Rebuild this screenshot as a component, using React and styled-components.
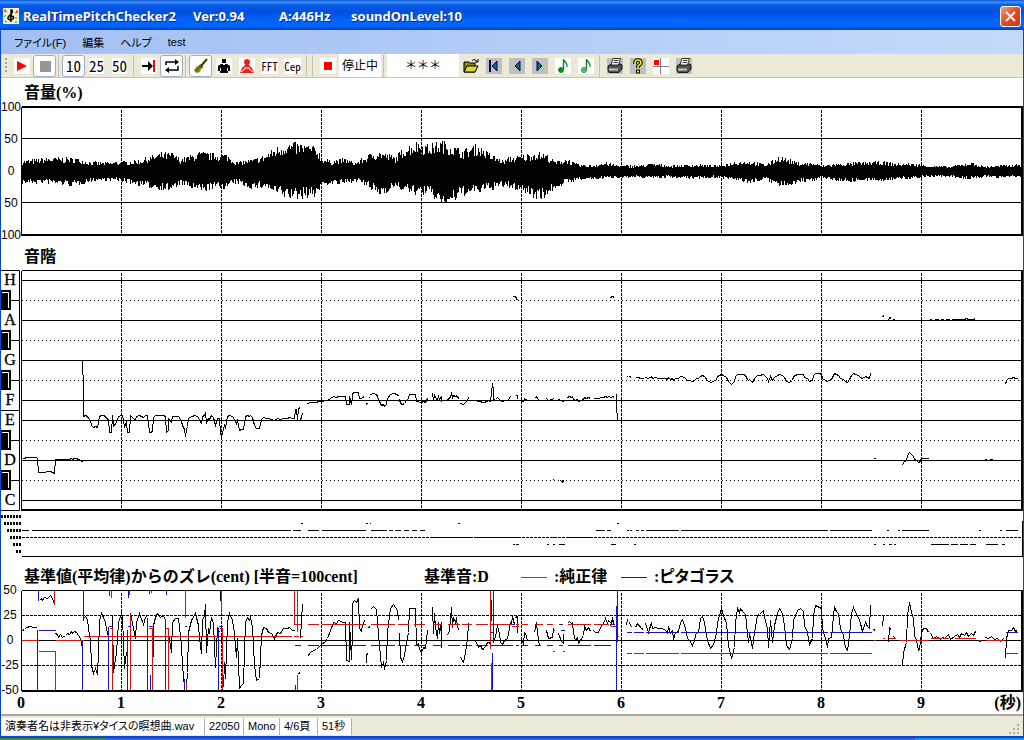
import styled, { createGlobalStyle } from "styled-components";

const GlobalStyle = createGlobalStyle`
  * {
    box-sizing: border-box;
  }

  body {
    margin: 0;
    background: #ffffff;
    color: #000000;
    font-family: "Liberation Sans", "Noto Sans CJK JP", sans-serif;
    font-size: 11px;
  }

  button {
    font: inherit;
    color: inherit;
  }
`;

/* ---------- data ---------- */

// Every panel is a slice of the same canvas: x runs from 21 (0 s) to 1021 (10 s).
const LEFT = 21;
const WIDTH = 1002;
const SECONDS = [1, 2, 3, 4, 5, 6, 7, 8, 9];

// [x, height above zero, height below zero]
const envelope = [
  [21, 11, 12], [50, 14, 12], [75, 14, 15], [90, 10, 10], [105, 9, 9], [121, 10, 10],
  [140, 12, 15], [160, 19, 18], [172, 19, 20], [180, 13, 13], [200, 20, 21], [215, 18, 17],
  [226, 18, 17], [236, 10, 12], [252, 12, 18], [265, 17, 16], [273, 23, 22], [285, 29, 27],
  [300, 29, 28], [316, 25, 25], [322, 14, 14], [330, 11, 13], [345, 13, 13], [355, 9, 9],
  [370, 18, 18], [378, 21, 25], [395, 15, 16], [405, 26, 21], [417, 31, 24], [428, 27, 24],
  [442, 32, 34], [450, 28, 34], [462, 22, 25], [477, 28, 22], [490, 18, 19], [503, 11, 16],
  [510, 15, 17], [521, 16, 20], [536, 20, 28], [545, 18, 27], [555, 10, 17], [566, 13, 12],
  [578, 7, 9], [590, 6, 8], [605, 9, 7], [620, 6, 6], [640, 6, 6], [650, 8, 6],
  [670, 6, 6], [690, 7, 7], [720, 6, 6], [735, 10, 9], [750, 11, 12], [765, 7, 8],
  [780, 16, 16], [795, 10, 12], [815, 8, 9], [821, 6, 6], [840, 8, 10], [870, 10, 10],
  [885, 10, 9], [895, 8, 8], [915, 8, 7], [930, 6, 5], [950, 5, 5], [970, 9, 8],
  [985, 5, 5], [1000, 6, 6], [1021, 8, 6],
];

// y is the deviation in the cent panel (640 = 0 cent, 1px = 1 cent),
// base is the line of the note in the scale panel
const traces = [
  { base: 460, points: "22,630 24,629 26,627 30,626 33,627 36,627 37,628 38,700 41,698 44,699 47,697 50,695 52,699 54,704 55,633 57,634 58,637 60,634 62,637 65,635 67,633 69,634 71,631 72,633 74,631 76,632 78,635 80,638 81,643 82,647" },
  { base: 420, points: "82,340 83,480 83,618 85,616 87,619 88,628 90,640 91,665 93,673 95,668 97,674 98,652 99,620 101,613 103,617 105,622 106,628 108,637 109,700 111,700 112,615 113,672 116,652 118,622 121,613 122,617 124,668 126,652 127,700 129,698 130,613 132,623 135,638 136,622 139,613 143,624 145,617 147,615 149,700 151,700 152,690 153,625 155,617 157,613 160,617 163,615 165,620 166,700 168,690 168,632 171,652 172,622 175,618 178,618 181,645 182,665 184,687 185,720 186,685 187,672 188,632 191,620 195,613 198,625 199,638 201,653 202,620 204,615 205,604 206,652 208,628 209,633 211,617 213,623 215,667 217,628 219,632 220,700 221,718 223,687 224,662 225,678 227,622 229,613 232,620 234,633 236,657 237,638 239,688 241,685 243,683 245,622 247,617 249,620 250,617 252,627 254,665 256,680 259,678 261,635 263,627 266,628 268,632 271,633 274,638 277,632 280,633 283,628 287,628 289,627 292,630 294,630 295,585 296,583 297,638 298,580 300,575" },
  { base: 420, points: "300,638 301,620 302,604" },
  { base: 400, points: "307,656 310,652 313,650 316,649 318,647 322,643 324,642 327,638 330,630 333,622 336,623 338,620 343,622 345,622 346,660 349,661 349,622 351,659 352,632 352,603 354,600 356,602 358,598 359,628 361,631 362,625 364,620" },
  { base: 400, points: "366,662 366,655 367,653" },
  { base: 400, points: "368,628 369,626" },
  { base: 400, points: "370,609 373,606 376,609 377,622 379,645 381,667 383,662 384,669 386,660 387,632 390,608 393,604 397,610 398,620" },
  { base: 400, points: "399,633 400,657 402,661 404,655 406,642 408,632 409,608 412,608 415,608 416,645 418,643 419,649 421,652 423,647 425,648 427,630" },
  { base: 400, points: "432,607 433,633 434,613 435,627 437,638 438,622 439,633 441,622 441,647" },
  { base: 400, points: "447,635 449,630 450,618 451,607 452,627 453,617 455,622 456,617 457,627 459,630" },
  { base: 400, points: "460,657 463,662 465,652 467,638 468,623" },
  { base: 400, points: "475,640 478,647 480,645 482,649 484,648 486,643 488,642 490,643 491,600 492,555 493,590 493,642 495,636 497,625 499,633 500,642 502,644 504,640 507,638 508,633 510,622" },
  { base: 400, points: "515,617 517,616 517,632" },
  { base: 400, points: "521,638 523,644 524,632 525,633 527,640" },
  { base: 400, points: "534,632 536,622 537,632 539,646" },
  { base: 400, points: "546,630 548,638 552,637 553,628" },
  { base: 400, points: "558,633 561,641 563,643 563,633" },
  { base: 400, points: "567,623 569,621 571,623 572,622 573,633 575,640 577,637 578,643 580,640 583,635 584,626 586,630 588,627 590,631" },
  { base: 400, points: "593,630 595,632 598,632 601,625 603,623 605,618 607,623 608,620 611,623 612,620 614,623" },
  { base: 400, points: "616,605 616,660 617,745" },
  { base: 380, points: "626,625 627,619" },
  { base: 380, points: "629,622 631,627" },
  { base: 380, points: "635,627 637,623 641,628 643,629" },
  { base: 380, points: "645,623 648,632 651,622 652,628 655,627 658,628 662,628 665,630 667,633 668,626 670,633 672,630 673,639 675,632 678,631 680,622 682,619 685,628 687,638 689,640 692,645 694,640 696,632 698,632 700,618 702,616 704,622 707,640 710,648 713,644 716,633 717,622 719,615 721,608 723,615 726,623 728,645 731,658 734,647 735,622 737,608 739,612 740,608 743,612 745,614 747,633 748,642 749,633 752,648 754,632 757,615 759,614 763,610 764,617 767,628 768,647 770,620 772,642 774,625 777,613 779,608 782,613 784,625 786,645 789,649 792,638 793,620 797,610 800,608 803,611 804,625 807,632 809,644 812,638 813,615 815,605 819,607 821,608 822,628 825,638 827,647 828,638 831,637 833,615 834,607 836,611 838,613 840,628 843,635 845,647 847,650 849,635 851,613 853,607 855,612 858,617 860,623 862,631 865,622 867,626 869,628 870,605" },
  { base: 460, points: "873,629 875,630" },
  { base: 320, points: "882,626 883,616" },
  { base: 320, points: "888,642 889,627 891,630" },
  { base: 320, points: "893,636 895,638" },
  { base: 460, points: "898,641 899,640" },
  { base: 460, points: "902,665 903,652 906,642 907,615 909,602 911,612 913,618 914,635 916,640 918,650 919,649 921,632 923,628 926,628 928,632" },
  { base: 320, points: "930,633 933,638 936,636 940,639 942,637 944,638 948,634 950,639 954,636 957,634 959,637 961,633 964,635 966,632 968,636 971,633 973,635 975,631" },
  { base: 460, points: "978,641 980,641" },
  { base: 460, points: "985,637 988,638 991,636 994,639 997,638 1000,641 1003,638" },
  { base: 380, points: "1005,658 1006,638 1008,630 1011,630 1013,627 1015,631 1017,630" },
  { base: 300, points: "512,618 515,620 516,632 517,638" },
  { base: 300, points: "610,625 612,620 614,625" },
  { base: 480, points: "552,636 553,637" },
  { base: 480, points: "560,640 562,650 563,642" },
];

const octaveRows = [
  { y: 516, runs: [] },
  { y: 523, runs: [[300, 302], [365, 367], [369, 370], [457, 459], [616, 618]] },
  {
    y: 530,
    runs: [
      [21, 28], [31, 290], [292, 300], [307, 318], [321, 365], [370, 386], [388, 392],
      [394, 400], [403, 408], [411, 416], [419, 424], [595, 604], [606, 610], [626, 628],
      [629, 631], [635, 638], [640, 643], [645, 678], [680, 827], [829, 871], [886, 888],
      [897, 899], [901, 928], [978, 980], [999, 1001], [1005, 1017],
    ],
  },
  { y: 537, runs: [[430, 471], [473, 520], [550, 556], [567, 590]] },
  {
    y: 544,
    runs: [
      [512, 514], [515, 518], [546, 548], [552, 554], [558, 564], [610, 615], [633, 635],
      [873, 875], [882, 884], [888, 891], [893, 895], [930, 948], [950, 957], [959, 967],
      [969, 975], [985, 997], [1001, 1004],
    ],
  },
  { y: 551, runs: [] },
];

// just intonation / Pythagorean reference lines
const just = "M21 640H38M55 640H83M38 651H55V690M54 590V604M83 636H291M293 636H298M300 636H302M112 628V690M111 590V597M130 613V690M109 628H112M129 590V594M148 628H152V690M165 628H168V690M151 590V592M185 590V617M186 682V690M219 628H222V690M221 590V610M294 590V624M297 590V631M294 624H300M297 674V690M307 624H318M321 624H365M370 624H394M397 624H408M413 624H424M432 624H441M447 624H459M461 624H471M475 624H487M490 624H512M515 624H518M521 624H527M534 624H542M546 624H552M558 624H562M567 624H590M593 624H608M490 590V648M491 662V690M552 651H554M562 651H564M511 626H518M610 626H615M616 636H618M626 653H631M633 653H643M645 653H678M680 653H827M829 653H871M873 640H875M882 638H884M888 638H895M898 640H928M930 638H940M943 638H948M954 638H975M978 640H980M985 640H1004M1005 653H1017";
const pythagorean = "M37 629V690M38 590V600M38 630H55M82 640V690M83 590V620M108 626V690M109 590V595M108 626H112M127 629V690M128 590V597M127 626H130M147 617V690M150 674V690M148 626H152M149 590V593M165 618V690M166 590V594M184 678V690M184 626H186M218 627V690M218 626H222V626M295 684V690M294 645H300M307 645H318M321 645H365M370 645H394M397 645H408M413 645H424M432 645H441M447 645H459M461 645H471M475 645H487M490 645H512M515 645H518M521 645H527M534 645H540M546 645H552M558 645H562M567 645H590M593 645H610M493 590V640M492 652V690M490 632H493M511 624H514M552 630H554M560 630H564M559 624H561M610 624H614M616 605V690M617 590V641M626 632H631M633 632H643M645 632H678M680 632H827M829 632H871M1005 632H1017";

const waveform = (() => {
  let seed = 7;
  const random = () => {
    seed = (seed * 16807) % 2147483647;
    return seed / 2147483647;
  };
  let d = "";
  let i = 0;
  for (let x = 22; x < 1022; x++) {
    while (i < envelope.length - 2 && envelope[i + 1][0] <= x) i++;
    const [x0, up0, down0] = envelope[i];
    const [x1, up1, down1] = envelope[i + 1];
    const t = (x - x0) / (x1 - x0);
    const up = (up0 + (up1 - up0) * t) * (0.55 + 0.45 * random());
    const down = (down0 + (down1 - down0) * t) * (0.55 + 0.45 * random());
    d += `M${x} ${Math.round(170 - up)}V${Math.round(171 + down)}`;
  }
  return d;
})();

const parse = (points) => points.split(" ").map((point) => point.split(",").map(Number));

const toScale = ({ base, points }) =>
  parse(points)
    .map(([x, y]) => `${x},${Math.round(base + (y - 640) / 5)}`)
    .join(" ");

// the pen is lifted while the pitch is more than 50 cents away
const toCents = ({ points }) => {
  let down = false;
  return parse(points)
    .map(([x, y]) => {
      const inside = y >= 590 && y <= 690;
      const step = inside ? `${down ? "L" : "M"}${x} ${y}` : "";
      down = inside;
      return step;
    })
    .join("");
};

/* ---------- charts ---------- */

const Plot = ({ top, height, children, label }) => (
  <PlotSvg
    viewBox={`${LEFT} ${top} ${WIDTH} ${height}`}
    preserveAspectRatio="none"
    $height={height}
    role="img"
    aria-label={label}
  >
    <g transform="translate(0.5 0.5)">{children}</g>
  </PlotSvg>
);

const Seconds = ({ from, to }) =>
  SECONDS.map((s) => (
    <path key={s} d={`M${LEFT + s * 100} ${from}V${to}`} strokeDasharray="3 1" />
  ));

const VolumeChart = () => (
  <ChartRow>
    <Axis $height={130}>
      {[["100", 5], ["50", 37], ["0", 69], ["50", 101], ["100", 133]].map(([text, y]) => (
        <text key={y} x="10" y={y}>
          {text}
        </text>
      ))}
    </Axis>
    <Plot top={106} height={130} label="音量">
      <path d="M21 138H1022M21 170H1022M21 202H1022" />
      <Seconds from={109} to={234} />
      <path d={waveform} />
      <path d="M21 106V235M21 106H1022M21 107H1022M21 234H1022M21 235H1022M1021 106V235M1022 106V235" />
    </Plot>
  </ChartRow>
);

const notes = [["H", 280], ["A", 320], ["G", 360], ["F", 400], ["E", 420], ["D", 460], ["C", 500]];
const sharps = [300, 340, 380, 440, 480];

const ScaleChart = () => (
  <ChartRow>
    <Axis $height={242} viewBox="1 270 20 242">
      <path d="M1 270.5H19.5V510.5H1M1 410.5H19" fill="none" stroke="#000" />
      {sharps.map((y) => (
        <g key={y}>
          <rect x="1" y={y - 10} width="10" height="20" />
          <path d={`M2 ${y - 7.5}H8.5V${y + 8}`} fill="none" stroke="#fff" />
          <path d={`M11 ${y + 0.5}H19`} stroke="#000" />
        </g>
      ))}
      {notes.map(([note, y]) => (
        <NoteName key={note} x="10" y={y + 5}>
          {note}
        </NoteName>
      ))}
    </Axis>
    <Plot top={270} height={242} label="音階">
      {notes.map(([note, y]) => (
        <path key={note} d={`M21 ${y}H1022`} />
      ))}
      {sharps.map((y) => (
        <path key={y} d={`M21 ${y}H1022`} strokeDasharray="1 3" />
      ))}
      <Seconds from={272} to={509} />
      {traces.map((trace) => (
        <polyline key={trace.base + trace.points} points={toScale(trace)} />
      ))}
      <path d="M21 270V510M21 270H1022M21 509H1022M21 510H1022M1021 270V510M1022 270V510" />
    </Plot>
  </ChartRow>
);

const OctaveChart = () => (
  <ChartRow>
    <Axis $height={46} viewBox="1 512 20 46">
      {octaveRows.map(({ y }, row) =>
        Array.from({ length: 7 - row }, (_, i) => (
          <rect key={`${y}-${i}`} x={19 - i * 3} y={y - 1} width="2" height="3" />
        ))
      )}
    </Axis>
    <Plot top={512} height={46} label="オクターブ">
      <path d="M21 537H1022" strokeDasharray="3 1" />
      {octaveRows.map(({ y, runs }) => (
        <path key={y} d={runs.map(([a, b]) => `M${a} ${y}H${b}`).join("")} />
      ))}
      <path d="M21 556H1022M1022 520V556" />
    </Plot>
  </ChartRow>
);

const CentChart = () => (
  <>
    <ChartRow>
      <Axis $height={102}>
        {[["50", 4], ["25", 29], ["0", 54], ["-25", 79], ["-50", 104]].map(([text, y]) => (
          <text key={text} x="9" y={y}>
            {text}
          </text>
        ))}
      </Axis>
      <Plot top={590} height={102} label="基準値からのズレ">
        <path d="M21 640H1022" />
        <path d="M21 615H1022M21 665H1022" strokeDasharray="3 1" />
        <Seconds from={592} to={690} />
        {traces.slice(0, -4).map((trace) => (
          <path key={trace.base + trace.points} d={toCents(trace)} />
        ))}
        <path d="M39 600L41 598L42 600L44 597L47 598L50 595L52 598L54 604M220 590V600M298 674L299 672L300 673M511 624L512 616L514 624M610 626L612 618L614 625" />
        <path d={just} stroke="#d01414" />
        <path d={pythagorean} stroke="#1414c0" />
        <path d="M21 590V690M21 590H1022M21 690H1022M21 691H1022M1021 590V690M1022 590V690" />
      </Plot>
    </ChartRow>
    <TimeAxis>
      {[0, ...SECONDS].map((s) => (
        <text key={s} x={`${s * 10}%`} y="16" textAnchor="middle">
          {s}
        </text>
      ))}
      <text x="100%" y="16" textAnchor="end">
        (秒)
      </text>
    </TimeAxis>
  </>
);

/* ---------- icons ---------- */

const Icon = ({ children, bg = "#fff" }) => (
  <IconSvg viewBox="0 0 16 16" $bg={bg} aria-hidden="true">
    {children}
  </IconSvg>
);

const PlayIcon = () => (
  <Icon>
    <path d="M3 3L13 8L3 13Z" fill="#f00" />
  </Icon>
);

const StopIcon = ({ color, small }) => (
  <Icon>
    <path d={small ? "M4 4H12V12H4Z" : "M3 3H14V14H3Z"} fill={color} />
  </Icon>
);

const EndIcon = () => (
  <Icon>
    <path d="M1 7H7V3L12 8L7 13V9H1Z" />
    <path d="M12 2H14V14H12Z" fill="#f00" />
  </Icon>
);

const LoopIcon = () => (
  <Icon>
    <path d="M2 7V4H12M14 8V12H4" fill="none" stroke="#000" strokeWidth="1.5" />
    <path d="M11 1L15 4L11 7ZM5 9L1 12L5 15Z" />
  </Icon>
);

const ViolinIcon = () => (
  <Icon>
    <path d="M1 12L4 8L6 8L7 6L10 7L10 10L8 11L7 14L4 15L2 14Z" fill="#8a8a10" />
    <path d="M8 8L14 1" stroke="#3c3c00" strokeWidth="2" />
    <path d="M3 13L7 9M6 7L9 10" stroke="#404000" />
  </Icon>
);

const PersonIcon = () => (
  <Icon>
    <path d="M6 1H10V5H6ZM5 6H11L14 8V13H12V15H4V13H2V8Z" />
    <path d="M4 10H5V13H4ZM11 10H12V13H11ZM7 6H9V7H7Z" fill="#fff" />
  </Icon>
);

const SingerIcon = () => (
  <Icon>
    <circle cx="8" cy="4" r="3" fill="#e82020" />
    <path d="M7 6H9L13 10L15 15H1L3 10Z" fill="#e82020" />
    <path d="M5 10H11M2 14L6 11M14 14L10 11" stroke="#fff" />
  </Icon>
);

const FolderIcon = () => (
  <Icon bg="transparent">
    <path d="M1 4H6L7 5H12V14H1Z" fill="#8c8c00" stroke="#000" />
    <path d="M1 14L4 8H15L12 14Z" fill="#d8d840" stroke="#000" />
    <path d="M9 3C10 1 13 1 14 4M12 4H15V1" fill="none" stroke="#000" />
  </Icon>
);

const StepIcon = ({ dir }) => (
  <Icon bg="#c0c0c0">
    <path
      d={dir === "next" ? "M5 3L10 8L5 13Z" : "M11 3L6 8L11 13Z"}
      fill="#007060"
      stroke="#000070"
    />
    {dir === "first" && <path d="M3 2H5V14H3Z" fill="#000050" />}
  </Icon>
);

const NoteIcon = ({ plus }) => (
  <Icon>
    <path d="M8.5 1V11M9 2C10 5 13 5 12 9" fill="none" stroke="#108a20" strokeWidth="1.5" />
    <circle cx="6" cy="12" r="2.5" fill={plus ? "#fff" : "#108a20"} stroke="#108a20" />
    {plus && <path d="M6 10V14M4 12H8" stroke="#108a20" />}
  </Icon>
);

const PrinterIcon = () => (
  <Icon bg="#c0c0c0">
    <path d="M1 8L4 6H14L15 7V11L12 14.5H2L1 13Z" fill="#505050" stroke="#000" strokeWidth="0.8" />
    <path d="M4 7L6 0.5H13.5L11.5 7Z" fill="#fff" stroke="#000" strokeWidth="0.8" />
    <path d="M7 2.5H11.5M6.5 4.5H11" stroke="#000" strokeWidth="0.8" />
    <path d="M2 10.5H11V12.5H2Z" fill="#c8c8c8" />
    <path d="M7 11H10V12H7Z" fill="#c8c800" />
  </Icon>
);

const HelpIcon = () => (
  <Icon bg="#c0c0c0">
    <path d="M5 6V5Q5 2 8 2Q11 2 11 5Q11 6 8 8V10" fill="none" stroke="#000" strokeWidth="3.6" />
    <path d="M6 11.5H10V15.5H6Z" />
    <path d="M5 6V5Q5 2 8 2Q11 2 11 5Q11 6 8 8V10" fill="none" stroke="#f0f000" strokeWidth="1.6" />
    <path d="M7 12.5H9V14.5H7Z" fill="#f0f000" />
  </Icon>
);

const CrossIcon = () => (
  <Icon>
    <path d="M7.5 0V16M0 8.5H16" stroke="#808080" />
    <path d="M1 2H6V7H1Z" fill="#f00" />
  </Icon>
);

const AppIcon = () => (
  <Icon bg="#f4f4cc">
    <path
      d="M8 14V2C11 2 9 6 6 8C3 11 7 13 10 11C12 8 8 7 7 10"
      fill="none"
      stroke="#000"
      strokeWidth="1.5"
    />
    <path d="M1 3L4 4M2 1V3M12 5L15 4M14 2V5" stroke="#d02020" />
    <path d="M1 9L3 7M12 10H14M2 13L4 14M13 13V15" stroke="#20a020" />
  </Icon>
);

/* ---------- window ---------- */

const App = () => (
  <>
    <GlobalStyle />
    <Window>
      <TitleBar>
        <AppIcon />
        <Title>
          <TitlePart $width={170}>RealTimePitchChecker2</TitlePart>
          <TitlePart $width={86}>Ver:0.94</TitlePart>
          <TitlePart $width={72}>A:446Hz</TitlePart>
          <TitlePart>soundOnLevel:10</TitlePart>
        </Title>
        <CloseButton aria-label="閉じる">
          <svg width="19" height="19" viewBox="0 0 19 19" aria-hidden="true">
            <path d="M5 5L14 14M14 5L5 14" stroke="#fff" strokeWidth="2" />
          </svg>
        </CloseButton>
      </TitleBar>

      <MenuBar>
        <MenuItem>ファイル(F)</MenuItem>
        <MenuItem>編集</MenuItem>
        <MenuItem>ヘルプ</MenuItem>
        <MenuItem>test</MenuItem>
      </MenuBar>

      <Toolbar>
        <Grip />
        <ToolButton aria-label="再生"><PlayIcon /></ToolButton>
        <ToolButton $pressed aria-label="停止"><StopIcon color="#969696" /></ToolButton>
        <Separator />
        <ToolButton $pressed><Digits>10</Digits></ToolButton>
        <ToolButton><Digits>25</Digits></ToolButton>
        <ToolButton><Digits>50</Digits></ToolButton>
        <Separator />
        <ToolButton aria-label="末尾へ"><EndIcon /></ToolButton>
        <ToolButton $pressed aria-label="繰り返し"><LoopIcon /></ToolButton>
        <Separator />
        <ToolButton $pressed aria-label="楽器"><ViolinIcon /></ToolButton>
        <ToolButton aria-label="男声"><PersonIcon /></ToolButton>
        <ToolButton aria-label="女声"><SingerIcon /></ToolButton>
        <ToolButton><Method>FFT</Method></ToolButton>
        <ToolButton><Method>Cep</Method></ToolButton>
        <Separator />
        <Separator />
        <ToolButton aria-label="録音停止"><StopIcon small color="#f00" /></ToolButton>
        <ToolLabel $width={42}>停止中</ToolLabel>
        <Separator />
        <ToolLabel $width={72}>＊＊＊</ToolLabel>
        <ToolButton aria-label="開く"><FolderIcon /></ToolButton>
        <ToolButton aria-label="先頭"><StepIcon dir="first" /></ToolButton>
        <ToolButton aria-label="前へ"><StepIcon dir="prev" /></ToolButton>
        <ToolButton aria-label="次へ"><StepIcon dir="next" /></ToolButton>
        <ToolButton aria-label="音符"><NoteIcon /></ToolButton>
        <ToolButton aria-label="音符を追加"><NoteIcon plus /></ToolButton>
        <Separator />
        <ToolButton aria-label="印刷"><PrinterIcon /></ToolButton>
        <ToolButton aria-label="ヘルプ"><HelpIcon /></ToolButton>
        <ToolButton aria-label="座標"><CrossIcon /></ToolButton>
        <ToolButton aria-label="全頁印刷"><PrinterIcon /></ToolButton>
      </Toolbar>

      <Charts>
        <Heading $height={28}>音量(%)</Heading>
        <VolumeChart />
        <Heading $height={34}>音階</Heading>
        <ScaleChart />
        <OctaveChart />
        <Heading $height={32}>
          <HeadingPart $width={400}>基準値(平均律)からのズレ(cent) [半音=100cent]</HeadingPart>
          <HeadingPart $width={97}>基準音:D</HeadingPart>
          <LegendLine $color="#d22828" />
          <HeadingPart $width={67}>:純正律</HeadingPart>
          <LegendLine $color="#1414c0" />
          <HeadingPart $tight>:ピタゴラス</HeadingPart>
        </Heading>
        <CentChart />
      </Charts>

      <StatusBar>
        <StatusCell $width={204}>演奏者名は非表示¥タイスの瞑想曲.wav</StatusCell>
        <StatusCell $width={39}>22050</StatusCell>
        <StatusCell $width={36}>Mono</StatusCell>
        <StatusCell $width={38}>4/6頁</StatusCell>
        <StatusCell $width={34}>51秒</StatusCell>
        <SizeGrip viewBox="0 0 12 12" aria-hidden="true">
          <path d="M8 0H10V2H8ZM4 4H6V6H4ZM8 4H10V6H8ZM0 8H2V10H0ZM4 8H6V10H4ZM8 8H10V10H8Z" />
        </SizeGrip>
      </StatusBar>
    </Window>
    <Taskbar />
  </>
);

export default App;

const Window = styled.div`
  border: solid #0a46c8;
  border-width: 0 1px 2px;
`;

const TitleBar = styled.header`
  display: flex;
  align-items: center;
  height: 30px;
  margin: 0 -1px;
  padding: 2px 3px 0;
  background: linear-gradient(#0a50d0, #3c96ff 2px, #0a5ae6 5px, #0050e0 12px, #0064fa 20px, #0066ff 26px, #0040c0 30px);
`;

const Title = styled.h1`
  display: flex;
  flex: 1;
  margin: 0 0 0 4px;
  color: #ffffff;
  font: bold 13px/16px "Noto Sans", sans-serif;
  text-shadow: 1px 1px 0 #0a2878;
  white-space: nowrap;
`;

const TitlePart = styled.span`
  min-width: ${({ $width }) => ($width ? `${$width}px` : "auto")};
`;

const CloseButton = styled.button`
  display: flex;
  align-items: center;
  justify-content: center;
  width: 21px;
  height: 21px;
  padding: 0;
  border: 1px solid #ffffff;
  border-radius: 3px;
  background: linear-gradient(135deg, #f0a088, #e04c24 50%, #c83c14);
`;

const MenuBar = styled.nav`
  display: flex;
  align-items: center;
  gap: 16px;
  height: 24px;
  padding-left: 13px;
  background: linear-gradient(90deg, #a2bff3, #c4dafa);
`;

const MenuItem = styled.button`
  padding: 0;
  border: 0;
  background: none;
  font-feature-settings: "palt";
`;

const Toolbar = styled.div`
  display: flex;
  align-items: center;
  height: 24px;
  border-bottom: 1px solid #c8c5b4;
  background: #ece9d8;
`;

const Grip = styled.span`
  width: 2px;
  height: 16px;
  margin: 0 3px 0 4px;
  background: repeating-linear-gradient(#a8a594 0 2px, transparent 2px 4px);
`;

const ToolButton = styled.button`
  display: flex;
  flex: none;
  align-items: center;
  justify-content: center;
  width: 23px;
  height: 22px;
  padding: 0;
  border: 1px solid ${({ $pressed }) => ($pressed ? "#98b0c4" : "transparent")};
  border-radius: 3px;
  background: ${({ $pressed }) => ($pressed ? "#ffffff" : "transparent")};
`;

const Separator = styled.span`
  flex: none;
  width: 6px;
  height: 22px;
  background: linear-gradient(90deg, transparent 2px, #c5c2b2 2px 3px, transparent 3px);
`;

const Digits = styled.span`
  background: #ffffff;
  font: 15px/16px "Noto Sans CJK JP", sans-serif;
  font-feature-settings: "hwid";
`;

const Method = styled(Digits)`
  font-size: 11px;
`;

const ToolLabel = styled.span`
  flex: none;
  width: ${({ $width }) => $width}px;
  height: 23px;
  padding-top: 2px;
  background: #ffffff;
  font-size: 12px;
  line-height: 21px;
  text-align: center;
`;

const IconSvg = styled.svg`
  flex: none;
  width: 16px;
  height: 16px;
  background: ${({ $bg }) => $bg};
`;

const Charts = styled.main`
  background: #ffffff;
`;

const Heading = styled.h2`
  display: flex;
  align-items: flex-end;
  height: ${({ $height }) => $height}px;
  margin: 0;
  padding: 0 0 4px 23px;
  font: bold 16px/18px "Liberation Serif", "Noto Sans CJK JP", serif;
  white-space: nowrap;
`;

const HeadingPart = styled.span`
  min-width: ${({ $width }) => ($width ? `${$width}px` : "auto")};
  font-feature-settings: ${({ $tight }) => ($tight ? '"palt"' : "normal")};
`;

const LegendLine = styled.span`
  align-self: flex-end;
  width: 26px;
  height: 1px;
  margin: 0 7px 8px 0;
  background: ${({ $color }) => $color};
`;

const ChartRow = styled.div`
  display: flex;
`;

const Axis = styled.svg`
  flex: none;
  width: 20px;
  height: ${({ $height }) => $height}px;
  overflow: visible;
  font: 12px "Liberation Sans", sans-serif;
  text-anchor: middle;
`;

const NoteName = styled.text`
  font: 16px "Liberation Serif", serif;
  stroke: #000000;
  stroke-width: 0.3;
`;

const PlotSvg = styled.svg`
  display: block;
  flex: 1;
  min-width: 0;
  height: ${({ $height }) => $height}px;
  fill: none;
  stroke: #000000;
  shape-rendering: crispEdges;
`;

const TimeAxis = styled.svg`
  display: block;
  width: calc(100% - 22px);
  height: 22px;
  margin-left: 20px;
  overflow: visible;
  font: bold 16px "Liberation Serif", "Noto Sans CJK JP", serif;
`;

const StatusBar = styled.footer`
  display: flex;
  align-items: center;
  height: 22px;
  border-top: 2px solid #aca899;
  background: #ece9d8;
`;

const StatusCell = styled.span`
  min-width: ${({ $width }) => $width}px;
  height: 17px;
  padding-left: 4px;
  border-right: 1px solid #b4b1a2;
  background: #ffffff;
  line-height: 17px;
  font-feature-settings: "palt";
  white-space: nowrap;
`;

const SizeGrip = styled.svg`
  align-self: flex-end;
  width: 12px;
  height: 12px;
  margin: 0 2px 0 auto;
  fill: #b4b1a2;
`;

const Taskbar = styled.div`
  height: 2px;
  background: linear-gradient(90deg, #3c8c3c 106px, #2864dc 106px calc(100% - 109px), #1496f0 calc(100% - 109px));
`;
